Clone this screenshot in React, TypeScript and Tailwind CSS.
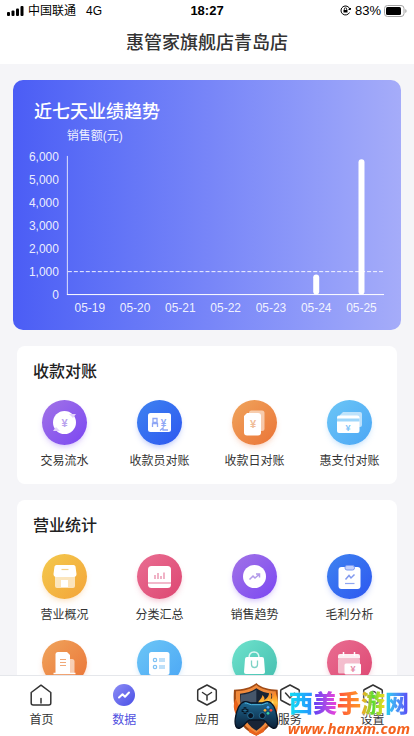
import React from "react";

interface Tile {
  label: string;
  color: string;
  icon: React.ReactNode;
}

const yLabels = ["6,000", "5,000", "4,000", "3,000", "2,000", "1,000", "0"];

const sales = [
  { day: "05-19", amount: 0 },
  { day: "05-20", amount: 0 },
  { day: "05-21", amount: 0 },
  { day: "05-22", amount: 0 },
  { day: "05-23", amount: 0 },
  { day: "05-24", amount: 880 },
  { day: "05-25", amount: 5900 },
];

const purple = "from-[#a272e6] to-[#7c44f2] shadow-[#7c44f2]/20";
const blue = "from-[#3f82f0] to-[#2f56f0] shadow-[#2f56f0]/20";
const orange = "from-[#efa45c] to-[#ea7336] shadow-[#ea7336]/20";
const sky = "from-[#6cc6f6] to-[#4ba6f5] shadow-[#4ba6f5]/20";
const yellow = "from-[#f3c94c] to-[#f3a43a] shadow-[#f3a43a]/20";
const pink = "from-[#e96d92] to-[#dd4672] shadow-[#dd4672]/20";
const teal = "from-[#6fe3cd] to-[#42bdae] shadow-[#42bdae]/20";

function Yen({ x, y, color, size = 11 }: { x: number; y: number; color: string; size?: number }) {
  return (
    <text
      x={x}
      y={y}
      fontSize={size}
      fontWeight="bold"
      textAnchor="middle"
      fill={color}
      fontFamily="Liberation Sans, sans-serif"
    >
      ¥
    </text>
  );
}

const reconcile: Tile[] = [
  {
    label: "交易流水",
    color: purple,
    icon: (
      <>
        <circle cx="22.5" cy="22.5" r="11.5" fill="#fff" />
        <path d="M27 14h7l-3 4zM18 31h-7l3-4z" fill="#e3d3fb" />
        <Yen x={22.5} y={26.5} color="#b9a3ee" />
      </>
    ),
  },
  {
    label: "收款员对账",
    color: blue,
    icon: (
      <>
        <rect x="11" y="13" width="23" height="19" rx="2.5" fill="#fff" />
        <path
          d="M16 18.500h4v4h-4zM15.500 27v-3.500h5V27M23 30.500l3-2.500v2h5"
          fill="none"
          stroke="#8ea6f5"
          strokeWidth="1.300"
        />
        <Yen x={26.5} y={26.5} color="#8ea6f5" size={10} />
      </>
    ),
  },
  {
    label: "收款日对账",
    color: orange,
    icon: (
      <>
        <rect x="17" y="10.500" width="15.500" height="20.500" rx="2.500" fill="#fff" opacity=".55" />
        <path d="M12 16l3-3h11a3 3 0 0 1 3 3v16.500a3 3 0 0 1-3 3H15a3 3 0 0 1-3-3z" fill="#fff" />
        <Yen x={21} y={28} color="#efbc98" />
      </>
    ),
  },
  {
    label: "惠支付对账",
    color: sky,
    icon: (
      <>
        <path d="M16 12h17a2 2 0 0 1 2 2v11a2 2 0 0 1-2 2H13V15z" fill="#fff" opacity=".6" />
        <rect x="10" y="15.500" width="22.500" height="17.500" rx="2" fill="#fff" />
        <path d="M10 18.500h22.500v3H10z" fill="#9fd7fb" />
        <Yen x={21} y={30.5} color="#7fc4f8" size={9} />
      </>
    ),
  },
];

const statistics: Tile[] = [
  {
    label: "营业概况",
    color: yellow,
    icon: (
      <>
        <path d="M13 22h20v10a2 2 0 0 1-2 2H15a2 2 0 0 1-2-2z" fill="#fff" opacity=".65" />
        <path d="M14.500 11h17a2 2 0 0 1 2 1.500L34.500 20a3 3 0 0 1-3 3h-17a3 3 0 0 1-3-3l1-7.500a2 2 0 0 1 2-1.500z" fill="#fff" />
        <path d="M19 26h7v7h-7z" fill="#fff" />
        <path d="M19.500 15.500h7" stroke="#f6cf86" strokeWidth="1.200" />
      </>
    ),
  },
  {
    label: "分类汇总",
    color: pink,
    icon: (
      <>
        <rect x="11" y="12" width="23" height="22" rx="3.500" fill="#fff" />
        <path d="M11 29h23" stroke="#e98aa8" strokeWidth="1.200" />
        <path d="M18 25v-4M21 25v-6M24 25v-3M27 25v-6.500" stroke="#e98aa8" strokeWidth="1.300" />
      </>
    ),
  },
  {
    label: "销售趋势",
    color: purple,
    icon: (
      <>
        <circle cx="22.500" cy="22.500" r="11.500" fill="#fff" />
        <path
          d="M17.500 25.500l3.500-3.500 2 2 4-3.500M24 20h3.500v3.500"
          fill="none"
          stroke="#b39ae9"
          strokeWidth="1.500"
        />
      </>
    ),
  },
  {
    label: "毛利分析",
    color: blue,
    icon: (
      <>
        <rect x="11.500" y="13" width="22" height="22" rx="3" fill="#fff" />
        <rect x="18" y="11.500" width="9.500" height="4.500" rx="2" fill="#c4d1fb" stroke="#7d9bf5" />
        <path d="M18.500 25.500l3.500-4 2 2.500 3.500-3.500" fill="none" stroke="#8199ee" strokeWidth="1.500" />
        <path d="M18 29.500h9.500" stroke="#8fa6f2" strokeWidth="1.200" />
      </>
    ),
  },
  {
    label: "营业报表",
    color: orange,
    icon: (
      <>
        <path d="M26 19h4a2.500 2.500 0 0 1 2.500 2.500V34H26z" fill="#fff" opacity=".6" />
        <path d="M16 12h9l3 3v18.500H13.500V14.500A2.500 2.500 0 0 1 16 12z" fill="#fff" />
        <path d="M11.500 33.500h22" stroke="#fff" strokeWidth="1.500" />
        <path d="M18 19.500h6M18 22.500h6M18 25.500h6" stroke="#f0a878" strokeWidth="1.200" />
      </>
    ),
  },
  {
    label: "商品明细",
    color: sky,
    icon: (
      <>
        <rect x="12" y="12" width="20.500" height="23" rx="2.500" fill="#fff" />
        <g fill="none" stroke="#7fc2f4" strokeWidth="1.200">
          <circle cx="18" cy="20" r="1.700" />
          <circle cx="18" cy="27" r="1.700" />
          <path d="M22 19h6M22 21h6M22 26h6M22 28h6" />
        </g>
      </>
    ),
  },
  {
    label: "商品销售",
    color: teal,
    icon: (
      <>
        <path d="M17 18c0-4 2-6 5-6s5 2 5 6" fill="none" stroke="#fff" strokeWidth="1.500" opacity=".8" />
        <path d="M15 17h15a2 2 0 0 1 2 2l1 13a2 2 0 0 1-2 2H14a2 2 0 0 1-2-2l1-13a2 2 0 0 1 2-2z" fill="#fff" />
        <path d="M19.500 20.500v4a3 3 0 0 0 6 0v-4" fill="none" stroke="#7fd3c6" strokeWidth="1.300" />
      </>
    ),
  },
  {
    label: "日结报表",
    color: pink,
    icon: (
      <>
        <rect x="11" y="18.500" width="22" height="15" rx="1.500" fill="#fff" opacity=".6" />
        <path d="M11 18.500V16a2 2 0 0 1 2-2h18a2 2 0 0 1 2 2v2.500z" fill="#fff" opacity=".9" />
        <path d="M16.500 12v4M27.500 12v4" stroke="#fff" strokeWidth="1.500" />
        <rect x="17.500" y="23.500" width="16.500" height="11" rx="1.500" fill="#fff" />
        <Yen x={26} y={32} color="#e58aa7" size={9} />
      </>
    ),
  },
];

function StatusBar() {
  return (
    <div className="flex h-[22px] items-center justify-between px-[7px] text-xs text-black">
      <div className="flex flex-1 items-center">
        <svg width="17" height="10" viewBox="0 0 17 10" className="mr-1">
          <rect x="0" y="6" width="3" height="4" rx="1" />
          <rect x="4.500" y="4.500" width="3" height="5.500" rx="1" />
          <rect x="9" y="2.500" width="3" height="7.500" rx="1" />
          <rect x="13.500" y="0" width="3" height="10" rx="1" />
        </svg>
        <span>中国联通</span>
        <span className="ml-2.5">4G</span>
      </div>
      <span className="text-[13px] font-bold">18:27</span>
      <div className="flex flex-1 items-center justify-end">
        <svg width="11" height="11" viewBox="0 0 11 11" fill="none" stroke="black" className="mr-1">
          <path d="M9.800 4.200A4.500 4.500 0 1 0 9.500 7.500" />
          <path d="M8.500 4.500h2v-1.500" />
          <rect x="3.500" y="5" width="4" height="2.500" fill="black" stroke="none" />
          <path d="M4.300 5V4a1.200 1.200 0 0 1 2.400 0v1" strokeWidth=".8" />
        </svg>
        <span className="text-[13px]">83%</span>
        <svg width="23" height="12" viewBox="0 0 23 12" className="ml-[3px]">
          <rect x=".5" y=".5" width="19.500" height="11" rx="3" fill="none" stroke="#a3a3a3" />
          <rect x="2" y="2" width="15" height="8" rx="1.500" />
          <path d="M21.300 4v4q1.300-.6 1.300-2t-1.300-2z" fill="#a3a3a3" />
        </svg>
      </div>
    </div>
  );
}

function SalesChart() {
  return (
    <svg
      viewBox="0 0 389 191"
      className="block w-full"
      fill="#fff"
      fontSize="12"
      fontFamily="Liberation Sans, Noto Sans CJK SC, sans-serif"
    >
      <text x="54" y="11" fillOpacity=".9">
        销售额(元)
      </text>
      {yLabels.map((label, i) => (
        <text key={label} x="46" y={32 + i * 23} textAnchor="end" fillOpacity=".9">
          {label}
        </text>
      ))}
      <path d="M54.500 27v139" stroke="#fff" strokeOpacity=".8" />
      <path d="M54 166h318" stroke="#fff" />
      <path d="M55 143h317" stroke="#fff" strokeDasharray="4 2" strokeOpacity=".9" />
      {sales.map(({ day, amount }, i) => {
        const x = 77 + i * 45.4;
        const height = (amount / 6000) * 138;
        return (
          <g key={day}>
            {amount > 0 && <rect x={x - 3} y={166 - height} width="6" height={height} rx="3" />}
            <text x={x} y="183" textAnchor="middle" fillOpacity=".9">
              {day}
            </text>
          </g>
        );
      })}
    </svg>
  );
}

function Section({ title, tiles }: { title: string; tiles: Tile[] }) {
  return (
    <section className="mx-[17px] mt-4 rounded-lg bg-white pt-3.5 pb-[13px]">
      <h2 className="px-4 text-base leading-6 font-medium text-[#222]">{title}</h2>
      <div className="mt-4 grid grid-cols-4 gap-y-[15px]">
        {tiles.map((tile) => (
          <button key={tile.label} type="button" className="flex flex-col items-center">
            <span className={`rounded-full bg-linear-to-br shadow-md ${tile.color}`}>
              <svg width="45" height="45" viewBox="0 0 45 45">
                {tile.icon}
              </svg>
            </span>
            <span className="mt-1.5 text-xs leading-5 text-[#333]">{tile.label}</span>
          </button>
        ))}
      </div>
    </section>
  );
}

const hexagon = "M11 1l8.500 4.500a1.500 1.500 0 0 1 .8 1.300v8.400a1.500 1.500 0 0 1-.8 1.300L11 21l-8.500-4.500a1.500 1.500 0 0 1-.8-1.300V6.800a1.500 1.500 0 0 1 .8-1.300z";

const tabs = [
  {
    name: "首页",
    icon: <path d="M11 1.200 1.200 8.500V19a2 2 0 0 0 2 2h15.600a2 2 0 0 0 2-2V8.500zM11 14.500V19" />,
  },
  {
    name: "数据",
    active: true,
    icon: (
      <>
        <defs>
          <linearGradient id="tabActive" x1="0" y1="0" x2="1" y2="1">
            <stop offset="0" stopColor="#8d8df5" />
            <stop offset="1" stopColor="#4a4fe6" />
          </linearGradient>
        </defs>
        <circle cx="11" cy="11" r="11" fill="url(#tabActive)" stroke="none" />
        <path d="M6 13.500l3.500-3.200 2.500 2.400 4-4.200" stroke="#fff" strokeWidth="2" />
      </>
    ),
  },
  {
    name: "应用",
    icon: (
      <>
        <path d={hexagon} />
        <path d="M6.500 8.500l4.500 3 4.500-3M11 11.500V16" />
      </>
    ),
  },
  {
    name: "服务",
    icon: (
      <>
        <path d={hexagon} />
        <path d="M6.500 9l4.500 5 4.500-5" />
      </>
    ),
  },
  {
    name: "设置",
    icon: (
      <>
        <path d={hexagon} />
        <circle cx="11" cy="11" r="3.500" />
      </>
    ),
  },
];

function TabBar() {
  return (
    <nav className="grid grid-cols-5 border-t border-gray-200 bg-white pt-2 pb-1.5">
      {tabs.map((tab) => (
        <a
          key={tab.name}
          href="#"
          className={`flex flex-col items-center text-xs leading-5 ${
            tab.active ? "text-[#4f50e0]" : "text-[#333]"
          }`}
        >
          <svg
            width="22"
            height="22"
            viewBox="0 0 22 22"
            fill="none"
            stroke="currentColor"
            strokeWidth="1.500"
            strokeLinejoin="round"
            strokeLinecap="round"
            className="mb-1"
          >
            {tab.icon}
          </svg>
          {tab.name}
        </a>
      ))}
    </nav>
  );
}

function GamepadShield() {
  return (
    <svg width="47" height="53" viewBox="20 18 141 159">
      <defs>
        <linearGradient id="pad" x1="0" y1="0" x2="0" y2="1">
          <stop offset="0" stopColor="#1f6a94" />
          <stop offset="1" stopColor="#0b2038" />
        </linearGradient>
        <linearGradient id="flame" x1="0" y1="0" x2="0" y2="1">
          <stop offset="0" stopColor="#ff7a1a" />
          <stop offset=".5" stopColor="#ffc23d" />
          <stop offset="1" stopColor="#e8420c" />
        </linearGradient>
      </defs>
      <path d="M90 18c15 14 38 20 64 20 4 62-9 112-64 138C32 150 18 100 23 38c27 0 52-6 67-20z" fill="#a04b16" />
      <path d="M90 24c15 12 36 18 58 19 3 56-10 102-58 127C40 145 26 100 29 43c26-1 46-7 61-19z" fill="#f08a3c" />
      <path d="M90 34c12 9 30 15 47 16 2 50-9 88-47 111C52 138 41 98 41 50c20-1 37-7 49-16z" fill="#182436" />
      <path d="M90 38v60H46c-3-16-3-30-2-45 18-1 34-7 46-15z" fill="#46566b" />
      <path d="M94 82c2-13 14-16 14-28 7 6 7 10 6 16 9-8 16-14 14-28 10 10 8 18 5 25 8-5 12-13 13-24 9 20 12 44 4 70l-42-8z" fill="url(#flame)" />
      <path d="M111 84c8-5 14-8 17-17 2 9-1 13-4 18 8-3 13-8 16-16 3 12-1 24-8 31z" fill="#ffe37a" />
      <path d="M28 110c-8-15-7-31 0-45 4 12 11 18 10 32zM66 152l24 16 28-20-6 17-22 11-22-10z" fill="#e9631c" />
      <path
        d="M55 74c10-2 14 4 20 4h30c7 0 11-6 21-4 14 3 23 25 27 50 3 22-3 33-14 29-14-4-20-24-30-24H71c-10 0-16 20-30 24-11 4-17-7-14-29 4-25 14-47 28-50z"
        fill="url(#pad)"
        stroke="#081424"
        strokeWidth="4"
      />
      <path d="M55 78c9-1 13 5 20 5h30c8 0 12-6 20-5" fill="none" stroke="#4db5e0" strokeWidth="3" />
      <path d="M56 91v20M46 101h20" stroke="#07111f" strokeWidth="8" />
      <path d="M56 94v14M49 101h14" stroke="#2f91c2" strokeWidth="2" />
      <circle cx="73" cy="116" r="9" fill="#0a1526" stroke="#318fbd" strokeWidth="2" />
      <circle cx="108" cy="116" r="9" fill="#0a1526" stroke="#318fbd" strokeWidth="2" />
      <circle cx="125" cy="91" r="4" fill="#4aa8ff" />
      <circle cx="116" cy="100" r="4" fill="#ffb02e" />
      <circle cx="134" cy="100" r="4" fill="#ff4a3a" />
      <circle cx="125" cy="109" r="4" fill="#38d0a0" />
    </svg>
  );
}

const brand = [
  { char: "西", color: "from-[#14e0f0] to-[#2a8bff]" },
  { char: "美", color: "from-[#5a3cf5] to-[#f03cd8]" },
  { char: "手", color: "from-[#ff4a3c] to-[#ff9a1e]" },
  { char: "游", color: "from-[#ffa21e] via-[#4fdc32] to-[#f4d81e]" },
  { char: "网", color: "from-[#12d8f0] to-[#5a3cf5]" },
];

function Brand() {
  return (
    <div className="pointer-events-none absolute right-1 bottom-0 flex items-end">
      <GamepadShield />
      <div className="ml-2 flex flex-col items-center">
        <div className="flex text-2xl leading-8 font-black drop-shadow-[0_0_1px_white]">
          {brand.map(({ char, color }) => (
            <span key={char} className={`bg-linear-to-r bg-clip-text text-transparent ${color}`}>
              {char}
            </span>
          ))}
        </div>
        <span className="font-['Open_Sans',sans-serif] text-[15px] leading-4 font-bold text-[#f4621e] italic drop-shadow-[0_0_1px_white]">
          www.hanxm.com
        </span>
      </div>
    </div>
  );
}

function App() {
  return (
    <div className="relative flex h-screen flex-col bg-[#f5f5f8] font-['Liberation_Sans','Noto_Sans_CJK_SC',sans-serif]">
      <header className="bg-white pb-[7px]">
        <StatusBar />
        <h1 className="pt-[7px] text-center text-lg leading-7 font-medium text-[#333]">惠管家旗舰店青岛店</h1>
      </header>

      <main className="min-h-0 flex-1 overflow-y-auto [scrollbar-width:none]">
        <section className="mx-[13px] mt-4 rounded-[10px] bg-linear-to-r from-[#4b5df5] via-[#7785f8] to-[#a5acf9] pt-[18px] pb-2.5">
          <h2 className="mb-[3px] px-[21px] text-lg leading-7 font-medium text-white">近七天业绩趋势</h2>
          <SalesChart />
        </section>
        <Section title="收款对账" tiles={reconcile} />
        <Section title="营业统计" tiles={statistics} />
      </main>

      <TabBar />
      <Brand />
    </div>
  );
}

export default App;
